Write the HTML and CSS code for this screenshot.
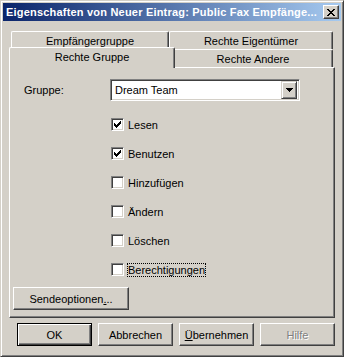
FILE: index.html
```html
<!DOCTYPE html>
<html lang="de">
<head>
<meta charset="UTF-8">
<meta name="viewport" content="width=device-width, initial-scale=1.0">
<title>Eigenschaften von Neuer Eintrag</title>
<link rel="stylesheet" href="styles.css">
</head>
<body>

<div class="window">
    <div class="titlebar">
        <span class="title">Eigenschaften von Neuer Eintrag: Public Fax Empfänge...</span>
        <span class="close-btn">
            <svg width="8" height="7" viewBox="0 0 8 7" shape-rendering="crispEdges"><path d="M0 0h2v1h-2z M6 0h2v1h-2z M1 1h2v1h-2z M5 1h2v1h-2z M2 2h4v1h-4z M3 3h2v1h-2z M2 4h4v1h-4z M1 5h2v1h-2z M5 5h2v1h-2z M0 6h2v1h-2z M6 6h2v1h-2z"/></svg>
        </span>
    </div>

    <div class="content">
        <div class="tab-row">
            <div class="tab tab-emp">Empfängergruppe</div>
            <div class="tab tab-fill">Rechte Eigentümer</div>
        </div>
        <div class="tab-row">
            <div class="tab tab-group active">Rechte Gruppe</div>
            <div class="tab tab-fill">Rechte Andere</div>
        </div>

        <div class="panel">
            <div class="field">
                <label class="field-label">Gruppe:</label>
                <div class="combo">
                    <span class="combo-text">Dream Team</span>
                    <span class="combo-btn">
                        <svg width="7" height="4" viewBox="0 0 7 4" shape-rendering="crispEdges"><path d="M0 0h7v1h-7z M1 1h5v1h-5z M2 2h3v1h-3z M3 3h1v1h-1z"/></svg>
                    </span>
                </div>
            </div>

            <div class="checks">
                <div class="check-row">
                    <span class="box"><svg width="7" height="7" viewBox="0 0 7 7" shape-rendering="crispEdges"><path d="M6 0h1v1h-1z M5 1h2v1h-2z M0 2h1v1h-1z M4 2h3v1h-3z M0 3h2v1h-2z M3 3h3v1h-3z M0 4h5v1h-5z M1 5h3v1h-3z M2 6h1v1h-1z"/></svg></span>
                    <span class="check-label">Lesen</span>
                </div>
                <div class="check-row">
                    <span class="box"><svg width="7" height="7" viewBox="0 0 7 7" shape-rendering="crispEdges"><path d="M6 0h1v1h-1z M5 1h2v1h-2z M0 2h1v1h-1z M4 2h3v1h-3z M0 3h2v1h-2z M3 3h3v1h-3z M0 4h5v1h-5z M1 5h3v1h-3z M2 6h1v1h-1z"/></svg></span>
                    <span class="check-label">Benutzen</span>
                </div>
                <div class="check-row"><span class="box"></span><span class="check-label">Hinzufügen</span></div>
                <div class="check-row"><span class="box"></span><span class="check-label">Ändern</span></div>
                <div class="check-row"><span class="box"></span><span class="check-label">Löschen</span></div>
                <div class="check-row"><span class="box"></span><span class="check-label focus">Berechtigungen</span></div>
            </div>

            <button class="btn btn-send">Sendeoptionen<u>.</u>..</button>
        </div>

        <div class="footer">
            <button class="btn btn-default">OK</button>
            <button class="btn">Abbrechen</button>
            <button class="btn"><u>Ü</u>bernehmen</button>
            <button class="btn disabled">Hilfe</button>
        </div>
    </div>
</div>

</body>
</html>
```

FILE: styles.css
```css
* {
    box-sizing: border-box;
}
html, body {
    margin: 0;
}
body {
    font-family: "Liberation Sans", Arial, sans-serif;
    font-size: 11px;
    color: #000;
    background-color: #d4d0c8;
}
.window {
    width: 344px;
    height: 357px;
    padding: 2px;
    border: 1px solid;
    border-color: #d4d0c8 #404040 #404040 #d4d0c8;
    box-shadow: inset 1px 1px #fff, inset -1px -1px #808080;
    background-color: #d4d0c8;
}

/* title bar */
.titlebar {
    height: 18px;
    display: flex;
    align-items: center;
    padding: 0 2px 0 3px;
    background: linear-gradient(to right, #0a246a, #a6caf0);
}
.title {
    flex: 1;
    color: #fff;
    font-weight: bold;
    letter-spacing: 0.2px;
    white-space: nowrap;
    overflow: hidden;
}
.close-btn {
    width: 16px;
    height: 14px;
    display: flex;
    align-items: center;
    justify-content: center;
    border: 1px solid;
    border-color: #fff #404040 #404040 #fff;
    box-shadow: inset -1px -1px #808080;
    background-color: #d4d0c8;
}

.content {
    padding: 10px 6px 0 6px;
}

/* tabs */
.tab-row {
    display: flex;
    align-items: flex-start;
    height: 18px;
    margin: 0 2px;
}
.tab {
    height: 18px;
    display: flex;
    align-items: center;
    justify-content: center;
    border-top: 1px solid #fff;
    border-left: 1px solid #fff;
    border-right: 1px solid #404040;
    border-radius: 2px 2px 0 0;
    box-shadow: inset -1px 0 #808080;
    background-color: #d4d0c8;
    white-space: nowrap;
}
.tab-emp {
    flex: 0 0 158px;
}
.tab-group {
    flex: 0 0 162px;
}
.tab-fill {
    flex: 1;
}
.tab.active {
    position: relative;
    z-index: 1;
    flex-basis: 166px;
    height: 21px;
    margin: -2px -2px 0 -2px;
    padding-bottom: 2px;
}

/* panel */
.panel {
    height: 251px;
    padding: 11px 0 0 3px;
    border: 1px solid;
    border-color: #fff #404040 #404040 #fff;
    box-shadow: inset -1px -1px #808080;
}
.field {
    display: flex;
    align-items: center;
    padding-left: 11px;
}
.field-label {
    width: 86px;
}
.combo {
    width: 190px;
    height: 22px;
    display: flex;
    align-items: center;
    padding: 2px;
    border: 1px solid;
    border-color: #808080 #fff #fff #808080;
    box-shadow: inset 1px 1px #404040, inset -1px -1px #d4d0c8;
    background-color: #fff;
}
.combo-text {
    flex: 1;
    padding-left: 2px;
}
.combo-btn {
    width: 16px;
    height: 18px;
    display: flex;
    align-items: center;
    justify-content: center;
    border: 1px solid;
    border-color: #d4d0c8 #404040 #404040 #d4d0c8;
    box-shadow: inset 1px 1px #fff, inset -1px -1px #808080;
    background-color: #d4d0c8;
}

/* checkboxes */
.checks {
    display: flex;
    flex-direction: column;
    gap: 16px;
    margin: 17px 0 0 98px;
}
.check-row {
    display: flex;
    align-items: center;
    height: 13px;
}
.box {
    width: 13px;
    height: 13px;
    flex: none;
    display: flex;
    padding: 2px;
    border: 1px solid;
    border-color: #808080 #fff #fff #808080;
    box-shadow: inset 1px 1px #404040, inset -1px -1px #d4d0c8;
    background-color: #fff;
}
.check-label {
    margin-left: 3px;
    border: 1px solid transparent;
    line-height: 12px;
    white-space: nowrap;
}
.check-label.focus {
    border: 1px dotted #000;
}

/* buttons */
.btn {
    height: 23px;
    padding: 0;
    font: inherit;
    color: #000;
    border: 1px solid;
    border-color: #fff #404040 #404040 #fff;
    box-shadow: inset -1px -1px #808080;
    background-color: #d4d0c8;
}
.btn-send {
    width: 116px;
    margin-top: 11px;
}
.footer {
    display: flex;
    justify-content: flex-end;
    gap: 6px;
    margin-top: 5px;
}
.footer .btn {
    width: 75px;
}
.btn-default {
    border: 1px solid #000;
    box-shadow: inset 1px 1px #fff, inset -1px -1px #404040, inset -2px -2px #808080;
}
.btn.disabled {
    color: #808080;
    text-shadow: 1px 1px #fff;
}
```
